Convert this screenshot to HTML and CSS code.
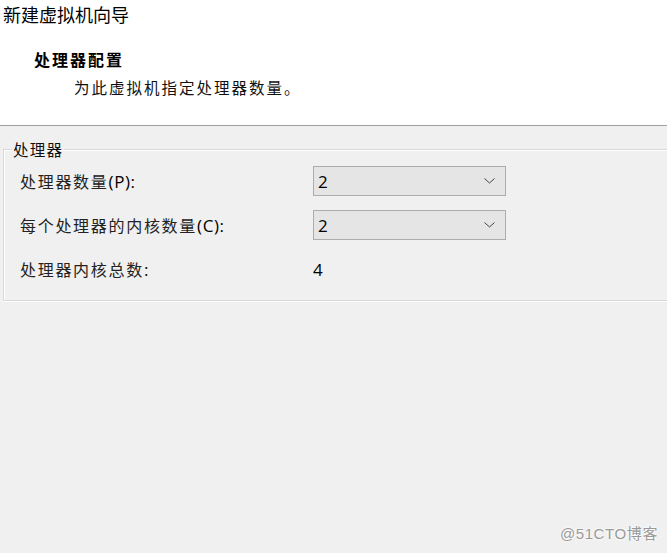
FILE: index.html
```html
<!doctype html>
<html lang="zh-CN">
<head>
    <meta charset="utf-8">
    <title>新建虚拟机向导</title>
    <link rel="stylesheet" href="styles.css">
</head>
<body>
    <div class="header">
        <div class="wizard-title">新建虚拟机向导</div>
        <div class="step-title">处理器配置</div>
        <div class="step-desc">为此虚拟机指定处理器数量。</div>
    </div>

    <div class="content">
        <fieldset class="group">
            <legend>处理器</legend>
            <div class="row">
                <label class="label">处理器数量<span class="latin">(P):</span></label>
                <div class="select"><span class="latin">2</span>
                    <svg class="chev" width="11" height="6" viewBox="0 0 11 6"><path d="M0.5 0.5 L5.5 5 L10.5 0.5" fill="none" stroke="#444" stroke-width="1"/></svg>
                </div>
            </div>
            <div class="row">
                <label class="label">每个处理器的内核数量<span class="latin">(C):</span></label>
                <div class="select"><span class="latin">2</span>
                    <svg class="chev" width="11" height="6" viewBox="0 0 11 6"><path d="M0.5 0.5 L5.5 5 L10.5 0.5" fill="none" stroke="#444" stroke-width="1"/></svg>
                </div>
            </div>
            <div class="row">
                <label class="label">处理器内核总数<span class="latin">:</span></label>
                <div class="value latin">4</div>
            </div>
        </fieldset>
    </div>

    <div class="watermark">@51CTO博客</div>
</body>
</html>
```

FILE: styles.css
```css
html, body {
    margin: 0;
    height: 100%;
}
body {
    background: #f0f0f0;
    font-family: "Noto Sans CJK SC", "Noto Sans", sans-serif;
    color: #000;
    overflow: hidden;
    position: relative;
}
.latin {
    font-family: "Open Sans", "Noto Sans", sans-serif;
}
.header {
    background: #fff;
    height: 126px;
    border-bottom: 1px solid #a0a0a0;
    box-sizing: border-box;
    padding: 2px 0 0 3px;
}
.wizard-title {
    font-size: 18px;
    line-height: 24px;
}
.step-title {
    font-size: 16px;
    font-weight: bold;
    line-height: 22px;
    margin: 22px 0 0 31px;
    letter-spacing: 2px;
}
.step-desc {
    font-size: 15.5px;
    line-height: 22px;
    margin: 6px 0 0 71px;
    letter-spacing: 2px;
    color: #111;
}
.content {
    padding: 13px 0 0 3px;
}
.group {
    margin: 0 -10px 0 0;
    padding: 7px 0 12px 16px;
    border: 1px solid #d9d9d9;
    box-shadow: inset 1px 1px 0 #fff, 0 1px 0 #fff;
    height: 162px;
    box-sizing: border-box;
}
.group legend {
    font-size: 15.5px;
    padding: 0 1px;
    margin-left: -8px;
    line-height: 20px;
    letter-spacing: 1.2px;
    color: #111;
}
.row {
    display: flex;
    align-items: center;
    height: 30px;
    margin-bottom: 14px;
}
.label {
    width: 293px;
    font-size: 16px;
    letter-spacing: 1.7px;
    color: #222;
}
.label .latin {
    font-size: 17px;
    letter-spacing: 0.6px;
    color: #000;
}
.select {
    width: 193px;
    height: 30px;
    box-sizing: border-box;
    background: #e5e5e5;
    border: 1px solid #acacac;
    display: flex;
    align-items: center;
    justify-content: space-between;
    padding: 0 10px 0 4px;
    font-size: 17px;
}
.value {
    font-size: 17px;
}
.watermark {
    position: absolute;
    right: 9px;
    bottom: 10px;
    font-size: 15px;
    letter-spacing: 0.6px;
    color: #9a9a9a;
    text-shadow: 0 0 3px #fff, 0 0 3px #fff;
    font-family: "Liberation Sans", "Noto Sans CJK SC", sans-serif;
}
```
